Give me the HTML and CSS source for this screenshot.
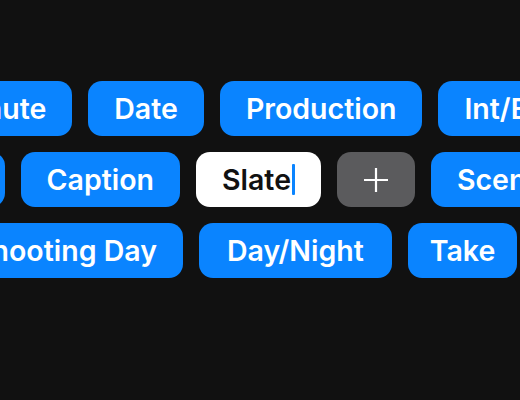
FILE: index.html
```html
<!DOCTYPE html>
<html lang="en">
<head>
<meta charset="utf-8">
<title>Tags</title>
<link rel="stylesheet" href="styles.css">
</head>
<body>
<div class="board">
  <div class="row row-1">
    <span class="pill">Minute</span>
    <span class="pill">Date</span>
    <span class="pill">Production</span>
    <span class="pill">Int/Ext</span>
  </div>
  <div class="row row-2">
    <span class="pill">Roll</span>
    <span class="pill">Caption</span>
    <span class="pill pill-input">Slate<span class="caret"></span></span>
    <span class="pill pill-add" aria-label="Add">
      <svg width="26" height="26" viewBox="0 0 26 26"><path d="M13 1v24M1 13h24" stroke="#fff" stroke-width="2.2" fill="none"/></svg>
    </span>
    <span class="pill">Scene</span>
  </div>
  <div class="row row-3">
    <span class="pill">Shooting Day</span>
    <span class="pill pill-wide">Day/Night</span>
    <span class="pill pill-tight">Take</span>
  </div>
</div>
</body>
</html>
```

FILE: styles.css
```css
html, body {
  margin: 0;
  padding: 0;
  background: #111111;
  width: 520px;
  height: 400px;
  overflow: hidden;
}
.board {
  padding-top: 81px;
  display: flex;
  flex-direction: column;
  gap: 16px;
  font-family: Inter, "Noto Sans", sans-serif;
  font-weight: 600;
  font-size: 28.5px;
}
.row {
  display: flex;
  gap: 16px;
  white-space: nowrap;
}
.row-1 { margin-left: -75px; }
.row-2 { margin-left: -98px; }
.row-3 { margin-left: -53px; }
.pill {
  flex-shrink: 0;
  height: 55px;
  padding: 0 26px;
  box-sizing: border-box;
  display: flex;
  align-items: center;
  border-radius: 14px;
  background: #0a84ff;
  color: #ffffff;
}
.pill-wide {
  padding: 0 28px;
}
.pill-tight {
  padding: 0 22px;
}
.pill-input {
  background: #ffffff;
  color: #111111;
}
.caret {
  display: inline-block;
  width: 3px;
  height: 31px;
  margin-left: 1px;
  background: #0a84ff;
  border-radius: 1px;
}
.pill-add {
  width: 78px;
  justify-content: center;
  padding: 0;
  background: #5b5b5d;
}
```
